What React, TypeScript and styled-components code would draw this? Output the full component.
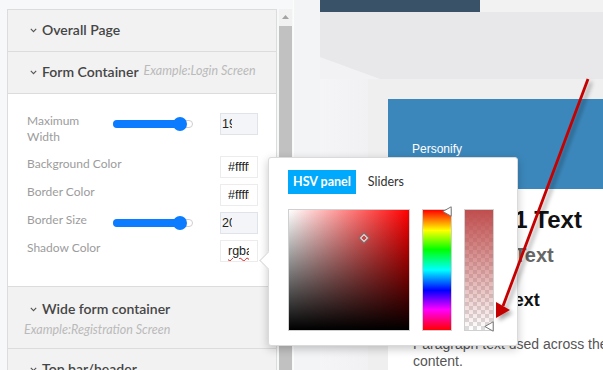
import React from "react";
import styled, { createGlobalStyle } from "styled-components";

const GlobalStyle = createGlobalStyle`
  html, body {
    margin: 0;
    padding: 0;
  }
  body {
    width: 603px;
    height: 370px;
    overflow: hidden;
    background: #f6f7f9;
    font-family: Lato, "Open Sans", sans-serif;
  }
`;

const Page = styled.div`
  position: relative;
  display: flex;
  width: 603px;
  height: 370px;
  overflow: hidden;
`;

/* ---------- left settings panel ---------- */

const Sidebar = styled.aside`
  flex: none;
  width: 294px;
  height: 100%;
  box-sizing: border-box;
  display: flex;
  gap: 2px;
  padding: 9px 0 0 7px;
  background: #f7f8fa;
  border-right: 1px solid #fcfcfd;
`;

const Accordion = styled.div`
  width: 270px;
  box-sizing: border-box;
  border: 1px solid #dcdcdc;
  border-bottom: none;
  background: #fff;
`;

const Header = styled.div<{ $stacked?: boolean }>`
  display: flex;
  flex-wrap: wrap;
  align-items: baseline;
  column-gap: 5px;
  row-gap: 3px;
  padding: ${(p) => (p.$stacked ? "12px 0 10px 16px" : "10px 0 11px 16px")};
  background: #f2f2f2;
  border-bottom: 1px solid #dcdcdc;
`;

const HeaderTitle = styled.span`
  display: flex;
  align-items: center;
  gap: 5px;
  padding-left: 6px;
  font-size: 14px;
  line-height: 20px;
  color: #454545;
  font-weight: 600;
  white-space: nowrap;
`;

const HeaderHint = styled.span`
  font-size: 12.5px;
  line-height: 16px;
  font-style: italic;
  color: #bababa;
  white-space: nowrap;
`;

const Body = styled.div`
  display: flex;
  flex-direction: column;
  gap: 6px;
  padding: 19px 0 24px 19px;
  border-bottom: 1px solid #dcdcdc;
`;

const Row = styled.div`
  display: grid;
  grid-template-columns: 86px 107px 38px;
  align-items: start;
`;

const Label = styled.div<{ $pad?: number }>`
  grid-column: 1;
  font-size: 12px;
  line-height: 16px;
  color: #9c9c9c;
  white-space: nowrap;
  padding-bottom: ${(p) => p.$pad ?? 0}px;
`;

const Slider = styled.div`
  position: relative;
  grid-column: 2;
  width: 80px;
  margin-top: 7px;
  height: 8px;
  box-sizing: border-box;
  border: 1px solid #cfcfcf;
  border-radius: 4px;
  background: #fff;
`;

const SliderFill = styled.div`
  position: absolute;
  left: -1px;
  top: -1px;
  bottom: -1px;
  border-radius: 4px;
  background: #0b7bff;
`;

const SliderKnob = styled.div`
  position: absolute;
  top: 50%;
  width: 14px;
  height: 14px;
  margin: -7px 0 0 -7px;
  border-radius: 50%;
  background: #0b7bff;
`;

const Field = styled.div<{ $kind: "number" | "text" }>`
  grid-column: 3;
  width: 38px;
  height: 22px;
  box-sizing: border-box;
  overflow: hidden;
  white-space: nowrap;
  font-family: "Liberation Sans", Arial, sans-serif;
  font-size: 12.5px;
  line-height: 20px;
  color: #222;
  border: 1px solid ${(p) => (p.$kind === "number" ? "#e0e4ea" : "#ececec")};
  background: ${(p) => (p.$kind === "number" ? "#f3f5f8" : "#fff")};
  padding: ${(p) => (p.$kind === "number" ? "0 25px 0 1px" : "0 8px 0 7px")};
`;

const FieldText = styled.span`
  display: block;
  overflow: hidden;
`;

const Misspelt = styled.span`
  text-decoration: underline wavy #e02020;
  text-decoration-thickness: 1px;
  text-underline-offset: 2px;
`;

const Scrollbar = styled.div`
  width: 13px;
  display: flex;
  flex-direction: column;
  background: #f1f1f1;
`;

const ScrollArrow = styled.div`
  height: 17px;
  display: flex;
  justify-content: center;
  padding-top: 6px;
  box-sizing: border-box;
`;

const ScrollThumb = styled.div`
  flex: 1;
  background: #c1c1c1;
`;

/* ---------- preview ---------- */

const Preview = styled.main`
  flex: 1;
  display: flex;
  flex-direction: column;
  padding-left: 26px;
  background: #f3f4f6;
  font-family: "Liberation Sans", Arial, sans-serif;
`;

const TopRow = styled.div`
  display: flex;
  height: 12px;
  background: #f2f2f3;
`;

const DarkTab = styled.div`
  width: 160px;
  background: #3a5268;
`;

const Band = styled.div`
  position: relative;
  height: 70px;
  background: #e8e8ea;

  &::after {
    content: "";
    position: absolute;
    left: 0;
    bottom: 0;
    width: 60px;
    height: 22px;
    background: #f2f2f4;
    clip-path: polygon(0 0, 100% 100%, 0 100%);
  }
`;

const Room = styled.div`
  flex: 1;
  display: flex;
`;

const SideWall = styled.div`
  width: 48px;
  background: linear-gradient(to right, #f5f5f7, #f1f1f3);
`;

const Floor = styled.div`
  flex: 1;
  padding: 20px 0 0 20px;
  background: #efefef;
`;

const Card = styled.div`
  height: 100%;
  background: #fff;
`;

const CardHeader = styled.div`
  height: 90px;
  box-sizing: border-box;
  padding: 42px 0 0 24px;
  background: #3b87bb;
  color: #fff;
  font-size: 12px;
  line-height: 16px;
`;

const CardBody = styled.div`
  padding: 17px 0 0 25px;
  white-space: nowrap;
`;

const Heading = styled.div<{ $size: number; $color: string; $gap: number }>`
  margin-top: ${(p) => p.$gap}px;
  font-size: ${(p) => p.$size}px;
  line-height: ${(p) => p.$size + 4}px;
  font-weight: 700;
  color: ${(p) => p.$color};
`;

const Paragraph = styled.p`
  margin: 25px 0 0;
  font-size: 14px;
  line-height: 17px;
  color: #555;
  white-space: normal;
  width: 240px;
`;

/* ---------- colour picker popover ---------- */

const Popover = styled.div`
  position: absolute;
  left: 268px;
  top: 157px;
  width: 250px;
  height: 189px;
  box-sizing: border-box;
  padding: 12px 0 0 19px;
  background: #fff;
  border: 1px solid #dadada;
  border-radius: 3px;
  box-shadow: 0 3px 10px rgba(0, 0, 0, 0.22);

  &::before {
    content: "";
    position: absolute;
    left: -7px;
    top: 96px;
    width: 12px;
    height: 12px;
    background: #fff;
    border-left: 1px solid #dadada;
    border-bottom: 1px solid #dadada;
    transform: rotate(45deg);
  }
`;

const Tabs = styled.div`
  display: flex;
  gap: 7px;
  font-family: Lato, "Open Sans", sans-serif;
  font-size: 12.5px;
`;

const Tab = styled.div<{ $active?: boolean }>`
  height: 24px;
  line-height: 24px;
  padding: 0 5px;
  font-weight: ${(p) => (p.$active ? 700 : 400)};
  color: ${(p) => (p.$active ? "#fff" : "#333")};
  background: ${(p) => (p.$active ? "#00a9fb" : "transparent")};
`;

const PickerRow = styled.div`
  display: flex;
  gap: 12px;
  margin-top: 15px;
`;

const Swatch = styled.div<{ $w: number }>`
  position: relative;
  width: ${(p) => p.$w}px;
  height: 122px;
  box-sizing: border-box;
  border: 1px solid #d0d0d0;
`;

const SvPlane = styled(Swatch)`
  background: linear-gradient(to top, #000, rgba(0, 0, 0, 0)),
    linear-gradient(to right, #fff, #f00);
`;

const HueBar = styled(Swatch)`
  background: linear-gradient(
    to bottom,
    #f00 0%,
    #ff0 17%,
    #0f0 33%,
    #0ff 50%,
    #00f 67%,
    #f0f 83%,
    #f00 100%
  );
`;

const AlphaBar = styled(Swatch)`
  background: linear-gradient(to bottom, rgba(192, 78, 78, 1), rgba(192, 78, 78, 0)),
    conic-gradient(#ddd 25%, #fff 0 50%, #ddd 0 75%, #fff 0) 0 0 / 8px 8px;
`;

const SvMarker = styled.div`
  position: absolute;
  left: 71px;
  top: 24px;
  width: 6px;
  height: 6px;
  background: #c44b4b;
  border: 1px solid #777;
  box-shadow: inset 0 0 0 1px #fff;
  transform: rotate(45deg);
`;

const Handle = styled.svg<{ $top: number }>`
  position: absolute;
  right: -1px;
  top: ${(p) => p.$top}px;
`;

function Chevron() {
  return (
    <svg width="7" height="5" viewBox="0 0 7 5">
      <polyline points="0.8,0.8 3.5,3.6 6.2,0.8" fill="none" stroke="#555" strokeWidth="1.1" />
    </svg>
  );
}

function PointerHandle({ top }: { top: number }) {
  return (
    <Handle $top={top} width="10" height="11" viewBox="0 0 10 11">
      <polygon points="0.8,5.5 9.2,0.8 9.2,10.2" fill="#fff" stroke="#777" strokeWidth="1" />
    </Handle>
  );
}

function RangeSlider({ value }: { value: number }) {
  return (
    <Slider>
      <SliderFill style={{ width: `${value}%` }} />
      <SliderKnob style={{ left: `${value}%` }} />
    </Slider>
  );
}

function RedArrow() {
  return (
    <svg
      width="603"
      height="370"
      viewBox="0 0 603 370"
      style={{ position: "absolute", left: 0, top: 0, pointerEvents: "none" }}
    >
      <defs>
        <filter id="arrowShadow" x="-20%" y="-20%" width="140%" height="140%">
          <feDropShadow dx="3" dy="3" stdDeviation="2" floodColor="#000" floodOpacity="0.35" />
        </filter>
      </defs>
      <g filter="url(#arrowShadow)">
        <line x1="588" y1="79" x2="503" y2="306" stroke="#c40000" strokeWidth="2.8" />
        <polygon points="496,318 496,302 510,310" fill="#c40000" />
      </g>
    </svg>
  );
}

export default function App() {
  return (
    <>
      <GlobalStyle />
      <Page>
        <Sidebar>
          <Accordion>
            <Header>
              <HeaderTitle>
                <Chevron />
                Overall Page
              </HeaderTitle>
            </Header>
            <Header>
              <HeaderTitle>
                <Chevron />
                Form Container
              </HeaderTitle>
              <HeaderHint>Example:Login Screen</HeaderHint>
            </Header>
            <Body>
              <Row>
                <Label $pad={5}>
                  Maximum
                  <br />
                  Width
                </Label>
                <RangeSlider value={84} />
                <Field $kind="number">
                  <FieldText>1920</FieldText>
                </Field>
              </Row>
              <Row>
                <Label>Background Color</Label>
                <Field $kind="text">
                  <FieldText>#ffffff</FieldText>
                </Field>
              </Row>
              <Row>
                <Label>Border Color</Label>
                <Field $kind="text">
                  <FieldText>#ffffff</FieldText>
                </Field>
              </Row>
              <Row>
                <Label>Border Size</Label>
                <RangeSlider value={84} />
                <Field $kind="number">
                  <FieldText>200</FieldText>
                </Field>
              </Row>
              <Row>
                <Label>Shadow Color</Label>
                <Field $kind="text">
                  <FieldText>
                    <Misspelt>rgba</Misspelt>(196,75,75,0)
                  </FieldText>
                </Field>
              </Row>
            </Body>
            <Header $stacked>
              <HeaderTitle>
                <Chevron />
                Wide form container
              </HeaderTitle>
              <HeaderHint>Example:Registration Screen</HeaderHint>
            </Header>
            <Header>
              <HeaderTitle>
                <Chevron />
                Top bar/header
              </HeaderTitle>
            </Header>
          </Accordion>
          <Scrollbar>
            <ScrollArrow>
              <svg width="7" height="4" viewBox="0 0 7 4">
                <polygon points="0,4 3.5,0 7,4" fill="#a3a3a3" />
              </svg>
            </ScrollArrow>
            <ScrollThumb />
          </Scrollbar>
        </Sidebar>

        <Preview>
          <TopRow>
            <DarkTab />
          </TopRow>
          <Band />
          <Room>
            <SideWall />
            <Floor>
              <Card>
                <CardHeader>Personify</CardHeader>
                <CardBody>
                  <Heading $size={24} $color="#111" $gap={0}>
                    Heading 1 Text
                  </Heading>
                  <Heading $size={20} $color="#666" $gap={9}>
                    Heading 2 Text
                  </Heading>
                  <Heading $size={18} $color="#111" $gap={22}>
                    Heading 3 Text
                  </Heading>
                  <Paragraph>Paragraph text used across the Site content.</Paragraph>
                </CardBody>
              </Card>
            </Floor>
          </Room>
        </Preview>

        <Popover>
          <Tabs>
            <Tab $active>HSV panel</Tab>
            <Tab>Sliders</Tab>
          </Tabs>
          <PickerRow>
            <SvPlane $w={122}>
              <SvMarker />
            </SvPlane>
            <HueBar $w={30}>
              <PointerHandle top={-4} />
            </HueBar>
            <AlphaBar $w={30}>
              <PointerHandle top={111} />
            </AlphaBar>
          </PickerRow>
        </Popover>

        <RedArrow />
      </Page>
    </>
  );
}
